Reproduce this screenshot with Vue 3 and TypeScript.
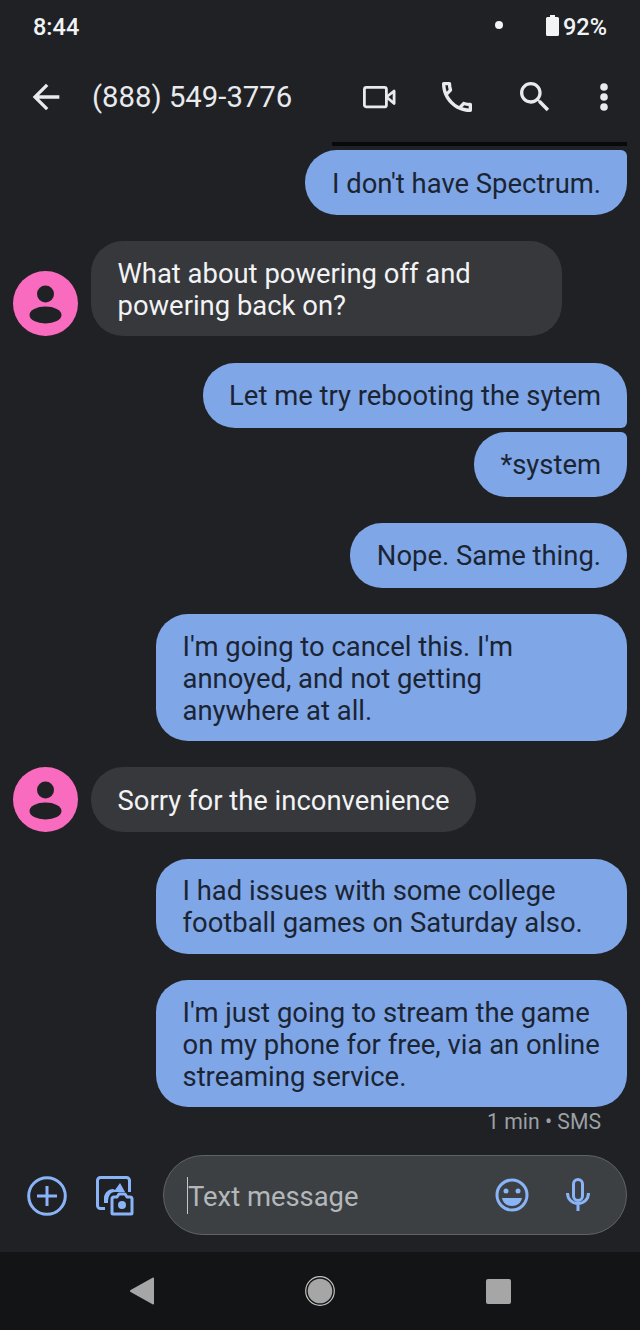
<script setup lang="ts">
interface Msg {
  text: string
  side: 'in' | 'out'
  cls?: string
}
const messages: Msg[] = [
  { text: "I don't have Spectrum.", side: 'out', cls: 'top-small first' },
  { text: 'What about powering off and powering back on?', side: 'in' },
  { text: 'Let me try rebooting the sytem', side: 'out', cls: 'bottom-small' },
  { text: '*system', side: 'out', cls: 'top-small joined' },
  { text: 'Nope. Same thing.', side: 'out' },
  { text: "I'm going to cancel this. I'm annoyed, and not getting anywhere at all.", side: 'out' },
  { text: 'Sorry for the inconvenience', side: 'in' },
  { text: 'I had issues with some college football games on Saturday also.', side: 'out' },
  { text: "I'm just going to stream the game on my phone for free, via an online streaming service.", side: 'out' },
]
</script>

<template>
  <div class="phone">
    <div class="status">
      <span class="time">8:44</span>
      <span class="dot"></span>
      <svg class="battery" width="13" height="21" viewBox="0 0 13 21">
        <path d="M4 0h5v2h2.500A1.500 1.500 0 0 1 13 3.500V19.500A1.500 1.500 0 0 1 11.500 21H1.500A1.500 1.500 0 0 1 0 19.500V3.500A1.500 1.500 0 0 1 1.500 2H4z" fill="#f1f3f4" />
      </svg>
      <span class="pct">92%</span>
    </div>

    <header class="bar">
      <svg class="ic" width="40" height="40" viewBox="0 0 24 24"><path fill="#e8eaed" d="M20 11H7.830l5.590-5.590L12 4l-8 8 8 8 1.410-1.410L7.830 13H20v-2z" /></svg>
      <span class="title">(888) 549-3776</span>
      <svg class="ic" width="40" height="40" viewBox="0 0 40 40" fill="none" stroke="#e8eaed" stroke-width="2.800" stroke-linejoin="round">
        <rect x="5.400" y="10.400" width="22" height="19.500" rx="2" />
        <path d="M27.500 20l7.600-6v12.500z" />
      </svg>
      <svg class="ic" width="40" height="40" viewBox="0 0 24 24"><path fill="#e8eaed" d="M6.540 5c.06.89.21 1.760.45 2.590l-1.200 1.200c-.41-1.200-.67-2.470-.76-3.790h1.510m9.860 12.020c.85.24 1.720.39 2.600.45v1.490c-1.320-.09-2.590-.35-3.800-.75l1.200-1.190M7.500 3H4c-.55 0-1 .45-1 1 0 9.390 7.610 17 17 17 .55 0 1-.45 1-1v-3.490c0-.55-.45-1-1-1-1.240 0-2.450-.2-3.570-.57-.1-.04-.21-.05-.31-.05-.26 0-.51.1-.71.29l-2.200 2.200c-2.830-1.450-5.150-3.760-6.590-6.590l2.200-2.200c.28-.28.36-.67.25-1.020C8.700 6.450 8.500 5.250 8.500 4c0-.55-.45-1-1-1z" /></svg>
      <svg class="ic" width="40" height="40" viewBox="0 0 24 24"><path fill="#e8eaed" d="M15.500 14h-.79l-.28-.27C15.410 12.590 16 11.110 16 9.500 16 5.910 13.090 3 9.500 3S3 5.910 3 9.500 5.910 16 9.500 16c1.610 0 3.090-.59 4.230-1.570l.27.28v.79l5 4.990L20.490 19l-4.990-5zm-6 0C7.010 14 5 11.990 5 9.500S7.010 5 9.500 5 14 7.010 14 9.500 11.990 14 9.500 14z" /></svg>
      <svg class="ic more" width="40" height="40" viewBox="0 0 40 40" fill="#e8eaed"><circle cx="20" cy="10" r="3.800" /><circle cx="20" cy="20" r="3.800" /><circle cx="20" cy="30" r="3.800" /></svg>
    </header>

    <main class="thread">
      <div class="scrolled-edge"></div>
      <div v-for="(m, i) in messages" :key="i" class="row" :class="[m.side, m.cls]">
        <div v-if="m.side === 'in'" class="avatar">
          <svg width="65" height="65" viewBox="0 0 65 65" fill="#202124">
            <circle cx="32.500" cy="23" r="8.500" />
            <ellipse cx="32.500" cy="44" rx="16" ry="8.500" />
          </svg>
        </div>
        <div class="bubble">{{ m.text }}</div>
      </div>
      <div class="meta">1 min • SMS</div>
    </main>

    <section class="composer">
      <svg class="ic plus" width="40" height="40" viewBox="0 0 40 40" fill="none" stroke="#8ab4f8" stroke-width="3">
        <circle cx="20" cy="20" r="18.300" />
        <path d="M20 10v20M10 20h20" />
      </svg>
      <svg class="ic gallery" width="40" height="40" viewBox="0 0 40 40" fill="none" stroke="#8ab4f8" stroke-width="3">
        <path d="M9 32.500H4.500a3 3 0 0 1-3-3V4.500a3 3 0 0 1 3-3h26a3 3 0 0 1 3 3V16" />
        <path fill="#8ab4f8" stroke="none" d="M8 27v-6c1-5 5-8 9-8l2 1 5-7 5 9H19c-4 0-7 3-7 11z" />
        <path stroke-linejoin="round" d="M16 37V23a2 2 0 0 1 2-2h3l2-3h6l2 3h3a2 2 0 0 1 2 2v14a1 1 0 0 1-1 1H17a1 1 0 0 1-1-1z" />
        <circle cx="26" cy="29" r="4" fill="#8ab4f8" stroke="none" />
      </svg>
      <div class="field">
        <span class="caret"></span>
        <span class="placeholder">Text message</span>
        <svg class="ic smile" width="34" height="34" viewBox="0 0 34 34">
          <circle cx="17" cy="17" r="15" fill="none" stroke="#8ab4f8" stroke-width="3" />
          <circle cx="11" cy="13" r="2.500" fill="#8ab4f8" />
          <circle cx="23" cy="13" r="2.500" fill="#8ab4f8" />
          <path d="M7 20h20c-1 5-5 8-10 8s-9-3-10-8z" fill="#8ab4f8" />
        </svg>
        <svg class="ic mic" width="34" height="34" viewBox="0 0 34 34" fill="none" stroke="#8ab4f8" stroke-width="3">
          <rect x="12.500" y="1.500" width="9" height="21" rx="4.500" />
          <path d="M6.500 15c0 6 4.500 10.500 10.500 10.500S27.500 21 27.500 15M17 25v8" />
        </svg>
      </div>
    </section>

    <nav class="nav">
      <svg width="24" height="28" viewBox="0 0 24 28"><path fill="#a6a6a6" d="M23 .500c.6-.2 1 .2 1 .8v25.400c0 .6-.4 1-1 .8L.6 15c-.8-.5-.8-1.500 0-2z" /></svg>
      <svg width="30" height="30" viewBox="0 0 30 30">
        <circle cx="15" cy="15" r="14.300" fill="none" stroke="#c4c4c4" stroke-width="1.200" />
        <circle cx="15" cy="15" r="12.300" fill="#a6a6a6" />
      </svg>
      <svg width="25" height="25" viewBox="0 0 25 25"><rect width="25" height="25" rx="2" fill="#a6a6a6" /></svg>
    </nav>
  </div>
</template>

<style scoped>
.phone {
  width: 640px;
  height: 1330px;
  display: flex;
  flex-direction: column;
  background: #202124;
  font-family: Roboto, "Liberation Sans", sans-serif;
  overflow: hidden;
}
.ic { display: block; flex: none; }

.status {
  height: 54px;
  display: flex;
  align-items: center;
  padding: 0 33px;
  color: #f1f3f4;
  font-size: 23.500px;
  font-weight: 500;
  box-sizing: border-box;
}
.time { flex: 1; }
.dot {
  width: 8px;
  height: 8px;
  border-radius: 50%;
  background: #f1f3f4;
  margin-right: 43px;
  margin-top: -4px;
}
.battery { margin-right: 4px; margin-top: -3px; }

.bar {
  height: 86px;
  display: flex;
  align-items: center;
  padding: 0 16px 0 26px;
  box-sizing: border-box;
  gap: 38px;
  color: #e8eaed;
}
.title {
  flex: 1;
  font-size: 29.300px;
  margin-left: -12px;
  color: #e8eaed;
}
.more { margin-left: -9px; }

.thread {
  flex: 1;
  position: relative;
  padding: 10px 13px 0;
  display: flex;
  flex-direction: column;
  box-sizing: border-box;
  min-height: 0;
}
.scrolled-edge {
  position: absolute;
  top: 2px;
  right: 13px;
  width: 295px;
  height: 4px;
  background: #08090a;
}
.row {
  display: flex;
  align-items: flex-end;
  gap: 13px;
  margin-top: 26.300px;
}
.row.first { margin-top: 0; }
.row.out { justify-content: flex-end; }
.row.joined { margin-top: 4px; }
.avatar {
  width: 65px;
  height: 65px;
  border-radius: 50%;
  background: #f96bbf;
  flex: none;
}
.avatar svg { display: block; }
.bubble {
  max-width: 471px;
  min-height: 65px;
  box-sizing: border-box;
  padding: 16.500px 26px 14.500px 26.500px;
  display: flex;
  align-items: center;
  font-size: 27.420px;
  line-height: 32px;
  border-radius: 32px;
}
.out .bubble {
  background: #7fa6e6;
  color: #1b2433;
}
.in .bubble {
  background: #37383b;
  color: #f1f3f4;
}
.top-small .bubble { border-top-right-radius: 6px; }
.bottom-small .bubble { border-bottom-right-radius: 6px; }

.meta {
  align-self: flex-end;
  margin-top: 3px;
  padding-right: 26px;
  font-size: 21.200px;
  line-height: 24px;
  color: #9aa0a6;
}

.composer {
  display: flex;
  align-items: center;
  padding: 0 13px 17px 27px;
  gap: 29px;
}
.plus { margin-top: 2px; }
.gallery { margin-top: 1px; }
.field {
  flex: 1;
  height: 80px;
  box-sizing: border-box;
  margin-left: -2px;
  border: 1.500px solid #5f6368;
  border-radius: 40px;
  background: #3c4043;
  display: flex;
  align-items: center;
  padding: 0 31px 0 23px;
  position: relative;
}
.caret {
  width: 1px;
  height: 37px;
  background: #c4c7c9;
  flex: none;
}
.placeholder {
  flex: 1;
  font-size: 27.400px;
  color: #b4b7ba;
  padding-top: 3px;
}
.smile { margin-left: -1px; margin-top: -1px; }
.mic { margin-left: 32px; }

.nav {
  height: 78px;
  flex: none;
  background: #131416;
  display: flex;
  align-items: center;
  padding-left: 130px;
  gap: 151px;
}
</style>
